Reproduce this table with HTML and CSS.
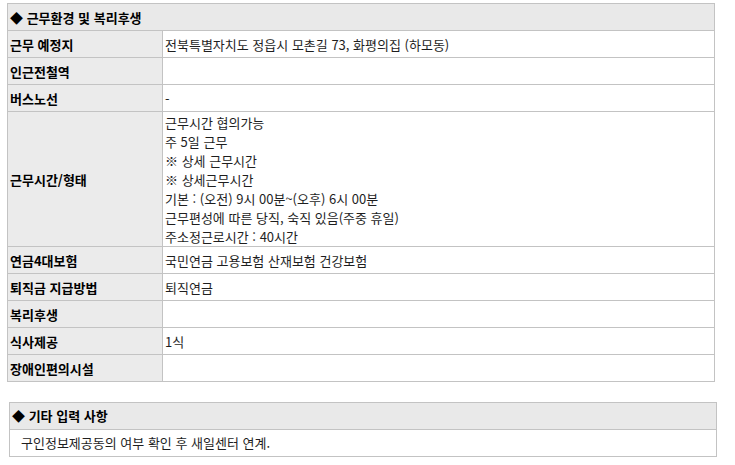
FILE: index.html
```html
<!DOCTYPE html>
<html lang="ko">
<head>
<meta charset="utf-8">
<link rel="stylesheet" href="styles.css">
</head>
<body>
<div class="page">
  <div class="info">
    <div class="head">◆ 근무환경 및 복리후생</div>
    <div class="label">근무 예정지</div><div class="value">전북특별자치도 정읍시 모촌길 73, 화평의집 (하모동)</div>
    <div class="label">인근전철역</div><div class="value"></div>
    <div class="label">버스노선</div><div class="value">-</div>
    <div class="label">근무시간/형태</div>
    <div class="value multi">
      <div>근무시간 협의가능</div>
      <div>주 5일 근무</div>
      <div>※ 상세 근무시간</div>
      <div>※ 상세근무시간</div>
      <div>기본 : (오전) 9시 00분~(오후) 6시 00분</div>
      <div>근무편성에 따른 당직, 숙직 있음(주중 휴일)</div>
      <div>주소정근로시간 : 40시간</div>
    </div>
    <div class="label">연금4대보험</div><div class="value">국민연금 고용보험 산재보험 건강보험</div>
    <div class="label">퇴직금 지급방법</div><div class="value">퇴직연금</div>
    <div class="label">복리후생</div><div class="value"></div>
    <div class="label">식사제공</div><div class="value">1식</div>
    <div class="label">장애인편의시설</div><div class="value"></div>
  </div>
  <div class="etc">
    <div class="etc-head">◆ 기타 입력 사항</div>
    <div class="etc-body">구인정보제공동의 여부 확인 후 새일센터 연계.</div>
  </div>
</div>
</body>
</html>
```
FILE: styles.css
```css
html, body {
  margin: 0;
  padding: 0;
  background: #ffffff;
}
body {
  font-family: "Noto Sans CJK KR", "Noto Sans", sans-serif;
  font-size: 13px;
  color: #1e1e1e;
}
.page {
  padding: 3px 0 0 7px;
}
.info {
  width: 707px;
  display: grid;
  grid-template-columns: 155px 1fr;
  border-top: 1px solid #c3c3c3;
  border-left: 1px solid #c3c3c3;
}
.info > div {
  border-right: 1px solid #c3c3c3;
  border-bottom: 1px solid #c3c3c3;
  min-height: 26px;
  display: flex;
  align-items: center;
  line-height: 19px;
}
.head {
  grid-column: 1 / 3;
  background: #e9e9e9;
  font-weight: bold;
  color: #000;
  padding-left: 2px;
}
.label {
  background: #ebebeb;
  font-weight: bold;
  color: #000;
  padding-left: 2px;
}
.value {
  padding-left: 2px;
}
.info > .multi {
  display: block;
  padding-top: 1px;
  padding-bottom: 0;
}
.etc {
  width: 706px;
  margin: 20px 0 0 2px;
  border: 1px solid #c3c3c3;
}
.etc-head {
  background: #e9e9e9;
  font-weight: bold;
  color: #000;
  height: 26px;
  line-height: 26px;
  padding-left: 2px;
  border-bottom: 1px solid #c3c3c3;
}
.etc-body {
  height: 26px;
  line-height: 26px;
  padding-left: 11px;
}
```
